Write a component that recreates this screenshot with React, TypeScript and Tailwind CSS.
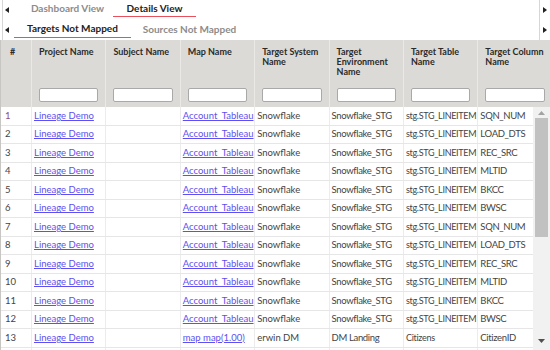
import React from "react";

const rows = [
  ["1", "Lineage Demo", "", "Account_Tableau", "Snowflake", "Snowflake_STG", "stg.STG_LINEITEM", "SQN_NUM"],
  ["2", "Lineage Demo", "", "Account_Tableau", "Snowflake", "Snowflake_STG", "stg.STG_LINEITEM", "LOAD_DTS"],
  ["3", "Lineage Demo", "", "Account_Tableau", "Snowflake", "Snowflake_STG", "stg.STG_LINEITEM", "REC_SRC"],
  ["4", "Lineage Demo", "", "Account_Tableau", "Snowflake", "Snowflake_STG", "stg.STG_LINEITEM", "MLTID"],
  ["5", "Lineage Demo", "", "Account_Tableau", "Snowflake", "Snowflake_STG", "stg.STG_LINEITEM", "BKCC"],
  ["6", "Lineage Demo", "", "Account_Tableau", "Snowflake", "Snowflake_STG", "stg.STG_LINEITEM", "BWSC"],
  ["7", "Lineage Demo", "", "Account_Tableau", "Snowflake", "Snowflake_STG", "stg.STG_LINEITEM", "SQN_NUM"],
  ["8", "Lineage Demo", "", "Account_Tableau", "Snowflake", "Snowflake_STG", "stg.STG_LINEITEM", "LOAD_DTS"],
  ["9", "Lineage Demo", "", "Account_Tableau", "Snowflake", "Snowflake_STG", "stg.STG_LINEITEM", "REC_SRC"],
  ["10", "Lineage Demo", "", "Account_Tableau", "Snowflake", "Snowflake_STG", "stg.STG_LINEITEM", "MLTID"],
  ["11", "Lineage Demo", "", "Account_Tableau", "Snowflake", "Snowflake_STG", "stg.STG_LINEITEM", "BKCC"],
  ["12", "Lineage Demo", "", "Account_Tableau", "Snowflake", "Snowflake_STG", "stg.STG_LINEITEM", "BWSC"],
  ["13", "Lineage Demo", "", "map map(1.00)", "erwin DM", "DM Landing", "Citizens", "CitizenID"],
  ["", "", "", "", "", "", "", ""],
];

const headers: string[][] = [
  ["#"],
  ["Project Name"],
  ["Subject Name"],
  ["Map Name"],
  ["Target System", "Name"],
  ["Target", "Environment", "Name"],
  ["Target Table", "Name"],
  ["Target Column", "Name"],
];

const gridCols = "grid grid-cols-[30px_repeat(7,74.4px)]";

function LeftArrow() {
  return (
    <svg width="4" height="6" viewBox="0 0 4 6">
      <path d="M4 0 L0 3 L4 6 Z" fill="#222" />
    </svg>
  );
}
function RightArrow() {
  return (
    <svg width="4" height="6" viewBox="0 0 4 6">
      <path d="M0 0 L4 3 L0 6 Z" fill="#222" />
    </svg>
  );
}

function cellClass(ci: number, ri: number) {
  const base = "overflow-hidden whitespace-nowrap flex items-center leading-[12px]";
  const pad = ci > 0 ? " border-l border-[#ececec] pl-[2px]" : " pl-[4px]";
  let color = " text-[#444]";
  if (ci === 1 || ci === 3) color = " text-[#5e4ff0] underline";
  else if (ci === 0 && ri === 0) color = " text-[#8a4f80]";
  let track = "";
  if (ci === 6) track = " text-[9px] tracking-[-0.3px]";
  else if (ci >= 5) track = " tracking-[-0.35px]";
  return base + pad + color + track;
}

export default function App() {
  return (
    <div
      className="w-[550px] h-[350px] overflow-hidden bg-white relative text-[9.5px]"
      style={{ fontFamily: "Lato, 'Noto Sans', sans-serif" }}
    >
      {/* Tabs */}
      <div className="flex h-[40px] text-[10px]">
        <div className="w-[9px] border-l border-[#d6d6d6] ml-[2px] flex flex-col">
          <div className="h-[20px] flex items-center pl-[2px]"><LeftArrow /></div>
          <div className="h-[20px] flex items-center pl-[2px]"><LeftArrow /></div>
        </div>
        <div className="flex-1 flex flex-col">
          <div className="h-[20px] flex">
            <div className="ml-[15px] w-[83px] h-[17px] flex items-center justify-center font-bold text-[#8c8c8c]">
              Dashboard View
            </div>
            <div className="ml-[4px] w-[83px] h-[17px] flex items-center justify-center font-bold text-[#222] border-b-[1.5px] border-[#e8515b]">
              Details View
            </div>
          </div>
          <div className="h-[20px] flex">
            <div className="ml-[3px] w-[117px] h-[18px] flex items-center justify-center font-bold text-[#222] border-b-[1.5px] border-[#e8515b]">
              Targets Not Mapped
            </div>
            <div className="w-[117px] h-[18px] flex items-center justify-center font-bold text-[#8c8c8c]">
              Sources Not Mapped
            </div>
          </div>
        </div>
        <div className="w-[11px] border-l border-[#d6d6d6] flex flex-col">
          <div className="h-[20px] flex items-center pl-[3px]"><RightArrow /></div>
          <div className="h-[20px] flex items-center pl-[3px]"><RightArrow /></div>
        </div>
      </div>

      {/* Header */}
      <div className="w-[552px] bg-[#dcdad6] border-l border-[#c8c6c2]">
        <div className={gridCols}>
          {headers.map((h, i) => (
            <div
              key={i}
              className={`h-[42px] ${i === 0 ? "pl-[9px]" : "pl-[7px] border-l border-[#ebe9e6]"} font-bold text-[9px] text-[#2a2a2a] leading-[10px] flex flex-col pt-[7px]`}
            >
              {h.map((l, j) => (
                <span key={j} className="whitespace-nowrap">{l}</span>
              ))}
            </div>
          ))}
          {headers.map((h, i) => (
            <div
              key={"f" + i}
              className={`h-[25px] ${i > 0 ? "border-l border-[#ebe9e6] pl-[7px] pr-[7px]" : ""} flex items-center`}
            >
              {i > 0 && (
                <div className="w-full h-[14px] bg-white border border-[#a9a9a9] rounded-[2px]" />
              )}
            </div>
          ))}
        </div>
      </div>

      {/* Body */}
      <div className="flex h-[243px]">
        <div className="w-[539px] overflow-hidden border-l border-[#c8c6c2]">
          {rows.map((r, ri) => (
            <div key={ri} className={`${gridCols} h-[18.5px] border-b border-[#e6e6e6]`}>
              {r.map((c, ci) => (
                <div key={ci} className={cellClass(ci, ri)}>
                  {c}
                </div>
              ))}
            </div>
          ))}
        </div>
        {/* scrollbar */}
        <div className="w-[17px] bg-[#f1f1f1] flex flex-col items-center">
          <div className="h-[11px] w-full flex items-center justify-center">
            <svg width="7" height="4" viewBox="0 0 7 4"><path d="M0 4 L3.5 0 L7 4 Z" fill="#a3a3a3" /></svg>
          </div>
          <div className="h-[119px] w-[13px] bg-[#c1c1c1]" />
          <div className="flex-1" />
          <div className="h-[14px] w-full flex items-center justify-center mb-[2px]">
            <svg width="7" height="4" viewBox="0 0 7 4"><path d="M0 0 L3.5 4 L7 0 Z" fill="#505050" /></svg>
          </div>
        </div>
      </div>
    </div>
  );
}
